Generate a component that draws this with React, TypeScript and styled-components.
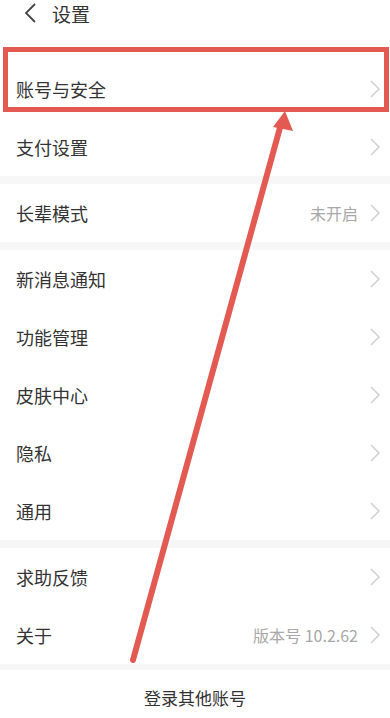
import React from "react";
import styled, { createGlobalStyle } from "styled-components";

const Global = createGlobalStyle`
  html, body { margin: 0; padding: 0; background: #ffffff; }
  body { font-family: "Noto Sans CJK SC", "Noto Sans", sans-serif; }
`;

const Page = styled.div`
  position: relative;
  width: 390px;
  height: 718px;
  overflow: hidden;
  background: #ffffff;
`;

const Header = styled.div`
  display: flex;
  align-items: center;
  height: 26px;
  padding-left: 24px;
  gap: 14px;
  color: #333;
  font-size: 19px;
  margin-bottom: 34px;
`;

const Section = styled.div`
  display: flex;
  flex-direction: column;
  background: #fff;
`;

const Band = styled.div<{ h?: number }>`
  height: ${(p) => p.h ?? 8}px;
  background: #f7f7f7;
`;

const Row = styled.div`
  display: flex;
  align-items: center;
  height: 58px;
  padding: 0 8px 0 16px;
`;

const Label = styled.span`
  flex: 1;
  font-size: 18px;
  color: #333;
`;

const Value = styled.span`
  font-size: 16px;
  color: #a8a8a8;
  margin-right: 10px;
`;

const Footer = styled.div`
  display: flex;
  justify-content: center;
  align-items: center;
  height: 54px;
  font-size: 17px;
  color: #333;
`;

const Overlay = styled.svg`
  position: absolute;
  left: 0;
  top: 0;
  pointer-events: none;
`;

const Chevron = () => (
  <svg width="14" height="20" viewBox="0 0 14 20">
    <polyline points="3,2 11,10 3,18" fill="none" stroke="#d2d2d2" strokeWidth="1.6" />
  </svg>
);

const Back = () => (
  <svg width="14" height="22" viewBox="0 0 14 22">
    <polyline points="11,2 2,11 11,20" fill="none" stroke="#444" strokeWidth="1.8" />
  </svg>
);

type Item = { label: string; value?: string };

const Group = ({ items }: { items: Item[] }) => (
  <Section>
    {items.map((it) => (
      <Row key={it.label}>
        <Label>{it.label}</Label>
        {it.value && <Value>{it.value}</Value>}
        <Chevron />
      </Row>
    ))}
  </Section>
);

export default function App() {
  return (
    <Page>
      <Global />
      <Header>
        <Back />
        <span>设置</span>
      </Header>
      <Group items={[{ label: "账号与安全" }, { label: "支付设置" }]} />
      <Band />
      <Group items={[{ label: "长辈模式", value: "未开启" }]} />
      <Band />
      <Group
        items={[
          { label: "新消息通知" },
          { label: "功能管理" },
          { label: "皮肤中心" },
          { label: "隐私" },
          { label: "通用" },
        ]}
      />
      <Band />
      <Group items={[{ label: "求助反馈" }, { label: "关于", value: "版本号 10.2.62" }]} />
      <Band h={6} />
      <Footer>登录其他账号</Footer>
      <Overlay width="390" height="718" viewBox="0 0 390 718">
        <rect x="5.5" y="49.5" width="381" height="60" fill="none" stroke="#e25a52" strokeWidth="5" />
        <line x1="133" y1="660" x2="281" y2="124" stroke="#e25a52" strokeWidth="6" strokeLinecap="round" />
        <polygon points="285,111 293,131 273,127" fill="#e25a52" />
      </Overlay>
    </Page>
  );
}
